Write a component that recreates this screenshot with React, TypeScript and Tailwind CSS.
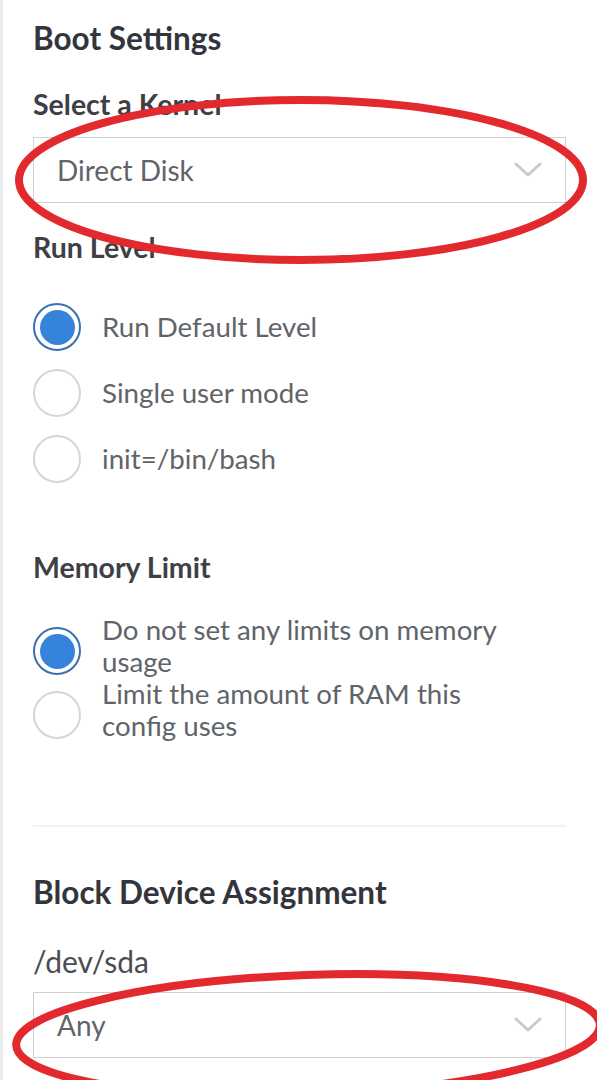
import { ReactNode } from "react";

const Chevron = () => (
  <svg width="28" height="16" viewBox="0 0 28 16" fill="none">
    <polyline points="2,2 14,13 26,2" stroke="#c9cacb" strokeWidth="3" strokeLinecap="round" strokeLinejoin="round" />
  </svg>
);

const SelectBox = ({ value }: { value: string }) => (
  <div className="h-[66px] w-full border border-[#cfd0d1] flex items-center justify-between pl-[23px] pr-[23px] bg-white">
    <span className="text-[28px] text-[#606469]">{value}</span>
    <Chevron />
  </div>
);

const Radio = ({ checked }: { checked?: boolean }) =>
  checked ? (
    <div className="w-[48px] h-[48px] shrink-0 rounded-full border-2 border-[#3a6fb0] bg-white flex items-center justify-center">
      <div className="w-[35px] h-[35px] rounded-full bg-[#3683dc]" />
    </div>
  ) : (
    <div className="w-[48px] h-[48px] shrink-0 rounded-full border-2 border-[#d6d6d6] bg-white" />
  );

const RadioRow = ({ checked, children }: { checked?: boolean; children: ReactNode }) => (
  <div className="h-[66px] flex items-center gap-[21px]">
    <Radio checked={checked} />
    <span className="text-[27.7px] text-[#606469]">{children}</span>
  </div>
);

const WrapRow = ({ checked, children }: { checked?: boolean; children: ReactNode }) => (
  <div className="flex items-start gap-[21px]">
    <div className="mt-[13px]">
      <Radio checked={checked} />
    </div>
    <span className="text-[27.7px] leading-[32px] text-[#606469] max-w-[420px]">{children}</span>
  </div>
);

export default function App() {
  return (
    <div className="relative w-[597px] h-[1080px] overflow-hidden bg-white font-['Lato',sans-serif]">
      <div className="border-l-[3px] border-[#ebebeb] h-full pl-[30px] pr-[31px] pt-[21px]">
        <h2 className="text-[31.5px] leading-[34px] font-bold text-[#32363c]">Boot Settings</h2>

        <div className="mt-[34px] text-[28.5px] leading-[30px] font-bold text-[#3d4045]">Select a Kernel</div>
        <div className="mt-[18px]">
          <SelectBox value="Direct Disk" />
        </div>

        <div className="mt-[29px] text-[28.5px] leading-[30px] font-bold text-[#3d4045]">Run Level</div>
        <div className="mt-[32px]">
          <RadioRow checked>Run Default Level</RadioRow>
          <RadioRow>Single user mode</RadioRow>
          <RadioRow>init=/bin/bash</RadioRow>
        </div>

        <div className="mt-[60px] text-[28.5px] leading-[30px] font-bold text-[#3d4045]">Memory Limit</div>
        <div className="mt-[32px]">
          <WrapRow checked>Do not set any limits on memory usage</WrapRow>
          <WrapRow>Limit the amount of RAM this config uses</WrapRow>
        </div>

        <div className="mt-[83px] h-[2px] bg-[#f2f2f2]" />

        <h2 className="mt-[48px] text-[31.5px] leading-[34px] font-bold text-[#32363c]">Block Device Assignment</h2>
        <div className="mt-[37px] text-[30px] leading-[30px] text-[#4a4d52]">/dev/sda</div>
        <div className="mt-[16px]">
          <SelectBox value="Any" />
        </div>
      </div>

      {/* hand-drawn red annotation marks */}
      <svg className="absolute inset-0 pointer-events-none" width="597" height="1080" viewBox="0 0 597 1080">
        <ellipse cx="301" cy="180" rx="282" ry="80" fill="none" stroke="#e2292e" strokeWidth="8" />
        <ellipse
          cx="308"
          cy="1035"
          rx="292"
          ry="60"
          transform="rotate(-2 308 1035)"
          fill="none"
          stroke="#e2292e"
          strokeWidth="8"
        />
      </svg>
    </div>
  );
}
